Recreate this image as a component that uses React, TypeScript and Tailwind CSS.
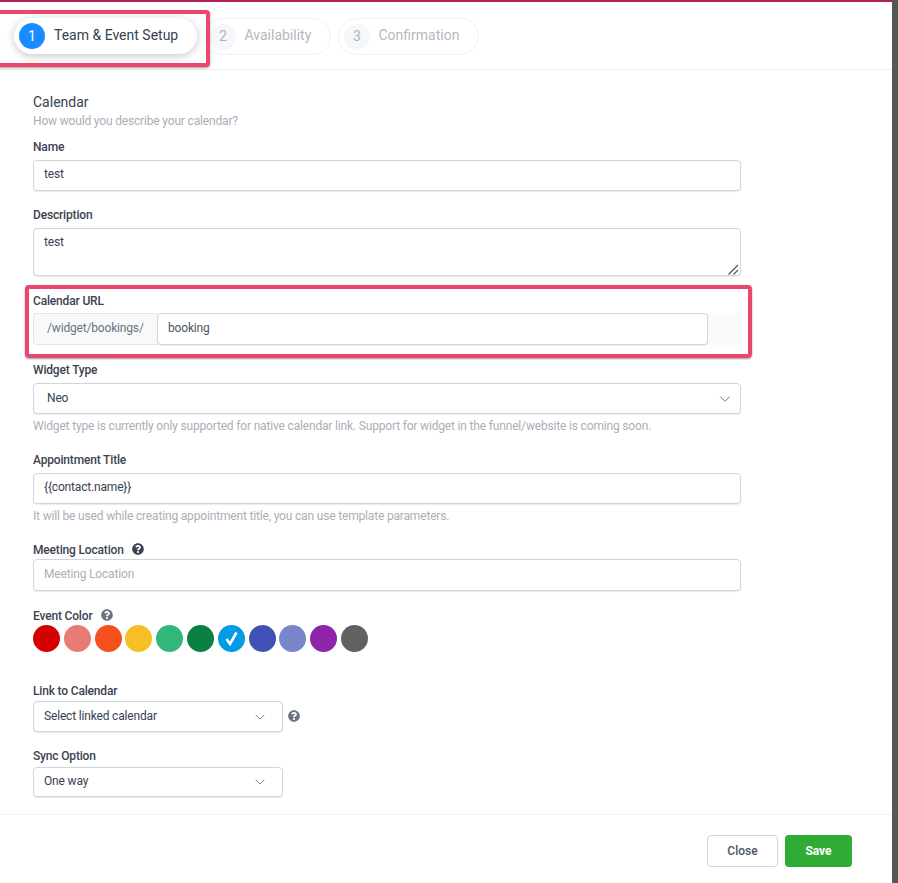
import { ChevronDown } from 'lucide-react';
import { FaQuestionCircle } from 'react-icons/fa';

const eventColors = [
  { hex: '#d50000' },
  { hex: '#e67c73' },
  { hex: '#f4511e' },
  { hex: '#f6bf26' },
  { hex: '#33b679' },
  { hex: '#0b8043' },
  { hex: '#039be5', selected: true },
  { hex: '#3f51b5' },
  { hex: '#7986cb' },
  { hex: '#8e24aa' },
  { hex: '#616161' },
];

const steps = [
  { num: 2, label: 'Availability', width: 'w-[127px]' },
  { num: 3, label: 'Confirmation', width: 'w-[141px]' },
];

const fieldClass =
  'block w-full rounded-[4px] border border-[#d1d5db] bg-white px-[10px] pb-[3px] text-[12px] tracking-[-0.17px] text-[#374151] shadow-[0_1px_1px_rgba(0,0,0,0.08)] outline-none placeholder:text-[#a9afb8]';

function Label({ text, className = '' }: { text: string; className?: string }) {
  return (
    <p className={`h-[14px] pt-[1px] text-[12px] leading-[14px] font-medium tracking-[-0.17px] text-[#3b4350] ${className}`}>
      {text}
    </p>
  );
}

function SelectBox({
  text,
  className,
  chevron = 16,
}: {
  text: string;
  className: string;
  chevron?: number;
}) {
  return (
    <div
      className={`flex items-center justify-between rounded-[4px] border border-[#d1d5db] bg-white text-[12px] tracking-[-0.17px] text-[#374151] shadow-[0_1px_1px_rgba(0,0,0,0.08)] ${className}`}
    >
      <span className="pb-[2px]">{text}</span>
      <ChevronDown size={chevron} strokeWidth={1.3} className="text-[#6b7280]" />
    </div>
  );
}

export default function App() {
  return (
    <div className="relative flex h-[883px] w-[898px] overflow-hidden bg-white font-['Roboto',sans-serif]">
      <div className="flex w-[892px] flex-col">
        <div className="h-[2px] bg-[#b01e5c]" />

        <header className="flex h-[68px] items-start gap-[7px] border-b border-[#eceef0] pt-[16px] pl-[14px]">
          <div className="flex h-[36px] w-[183px] items-center rounded-full bg-white pl-[5px] shadow-[0_2px_8px_rgba(0,0,0,0.22)]">
            <span className="flex h-[26px] w-[26px] items-center justify-center rounded-full bg-[#1a8cff] text-[14px] text-white">
              1
            </span>
            <span className="ml-[9px] pb-[1px] text-[14px] text-[#374151]">Team & Event Setup</span>
          </div>
          {steps.map((step) => (
            <div
              key={step.num}
              className={`flex h-[37px] items-center rounded-full border border-[#f1f2f4] pl-[5px] ${step.width}`}
            >
              <span className="flex h-[26px] w-[26px] items-center justify-center rounded-full bg-[#f5f7fa] text-[14px] text-[#aeb3bb]">
                {step.num}
              </span>
              <span className="ml-[8.5px] pb-[2px] text-[14px] text-[#b4b8bf]">{step.label}</span>
            </div>
          ))}
        </header>

        <main className="flex-1 pl-[33px]">
          <div className="w-[708px] pt-[24px]">
            <h2 className="text-[14px] leading-[16px] text-[#374151]">Calendar</h2>
            <p className="mt-[3px] h-[14px] pt-[1px] text-[12px] leading-[14px] tracking-[-0.17px] text-[#a9afb8]">
              How would you describe your calendar?
            </p>

            <Label text="Name" className="mt-[12px]" />
            <input readOnly value="test" className={`mt-[7px] h-[31px] ${fieldClass}`} />

            <Label text="Description" className="mt-[16px]" />
            <div className="relative mt-[7px]">
              <textarea
                readOnly
                value="test"
                className="block h-[48px] w-full resize-none rounded-[4px] border border-[#d1d5db] bg-white px-[10px] py-[5px] text-[12px] leading-[16px] tracking-[-0.17px] text-[#374151] shadow-[0_1px_1px_rgba(0,0,0,0.08)] outline-none"
              />
              {/* resize grip */}
              <svg className="absolute right-[2px] bottom-[1px] h-[11px] w-[11px] text-[#555]" viewBox="0 0 11 11" fill="none">
                <path d="M0.5 10.5 L10 1 M5.5 10.5 L10 6" stroke="currentColor" strokeWidth="1.2" />
              </svg>
            </div>

            <Label text="Calendar URL" className="mt-[17px]" />
            <div className="mt-[6px] flex h-[32px] rounded-[4px] bg-[#fafafb]">
              <div className="flex w-[124px] items-center rounded-l-[4px] border border-r-0 border-[#e2e5e9] bg-[#f8f9fb] pb-[2px] pl-[13px] text-[12px] tracking-[-0.17px] text-[#6b7280]">
                /widget/bookings/
              </div>
              <input
                readOnly
                value="booking"
                className="h-[32px] w-[551px] rounded-[4px] border border-[#d1d5db] bg-white px-[10px] pb-[2px] text-[12px] tracking-[-0.17px] text-[#4b5563] shadow-[0_1px_1px_rgba(0,0,0,0.08)] outline-none"
              />
            </div>

            <Label text="Widget Type" className="mt-[17px]" />
            <SelectBox text="Neo" chevron={18} className="mt-[7px] h-[31px] pr-[6px] pl-[13px]" />
            <p className="mt-[4px] h-[14px] pt-[1px] text-[12px] leading-[14px] tracking-[-0.17px] text-[#a9afb8]">
              Widget type is currently only supported for native calendar link. Support for widget in the funnel/website is coming soon.
            </p>

            <Label text="Appointment Title" className="mt-[20px]" />
            <input readOnly value="{{contact.name}}" className={`mt-[7px] h-[31px] ${fieldClass}`} />
            <p className="mt-[4px] h-[14px] pt-[1px] text-[12px] leading-[14px] tracking-[-0.17px] text-[#a9afb8]">
              It will be used while creating appointment title, you can use template parameters.
            </p>

            <div className="mt-[20px] flex items-center gap-[8px]">
              <Label text="Meeting Location" />
              <FaQuestionCircle size={12} className="text-[#374151]" />
            </div>
            <input readOnly placeholder="Meeting Location" className={`mt-[3px] h-[32px] ${fieldClass}`} />

            <div className="mt-[17px] flex items-center gap-[9px]">
              <Label text="Event Color" />
              <FaQuestionCircle size={12} className="text-[#6b7280]" />
            </div>
            <div className="mt-[3px] flex gap-[3.8px]">
              {eventColors.map((color) => (
                <span
                  key={color.hex}
                  style={{ backgroundColor: color.hex }}
                  className="flex h-[27px] w-[27px] items-center justify-center rounded-full"
                >
                  {color.selected && (
                    <svg className="h-[15px] w-[13px]" viewBox="0 0 13 15" fill="none">
                      <path d="M1.5 8 L5 13 L11.5 1.5" stroke="white" strokeWidth="2.6" />
                    </svg>
                  )}
                </span>
              ))}
            </div>

            <Label text="Link to Calendar" className="mt-[31px]" />
            <div className="mt-[4px] flex items-center gap-[5px]">
              <SelectBox text="Select linked calendar" className="h-[31px] w-[250px] pr-[14px] pl-[10px]" />
              <FaQuestionCircle size={12} className="mb-[2px] text-[#6b7280]" />
            </div>

            <Label text="Sync Option" className="mt-[16px]" />
            <SelectBox text="One way" className="mt-[5px] h-[30px] w-[250px] pr-[14px] pl-[10px]" />
          </div>
        </main>

        <footer className="flex h-[69px] items-start justify-end gap-[7px] border-t border-[#f0f1f3] pt-[20px] pr-[40px]">
          <button className="h-[32px] w-[71px] rounded-[4px] border border-[#d1d5db] bg-white text-[12px] font-medium text-[#4b5563]">
            Close
          </button>
          <button className="h-[32px] w-[67px] rounded-[4px] bg-[#2fac34] text-[12px] font-bold text-white">
            Save
          </button>
        </footer>
      </div>

      <div className="w-[6px] bg-[#54585a]" />

      {/* review highlights drawn on top of the page */}
      <div className="absolute top-[10px] left-[-6px] h-[57px] w-[216px] rounded-[4px] border-[4px] border-[#e9476d] shadow-[0_1px_2px_rgba(0,0,0,0.4)]" />
      <div className="absolute top-[285px] left-[25px] h-[73px] w-[727px] rounded-[4px] border-[4px] border-[#e9476d] shadow-[0_1px_2px_rgba(0,0,0,0.4)]" />
    </div>
  );
}
